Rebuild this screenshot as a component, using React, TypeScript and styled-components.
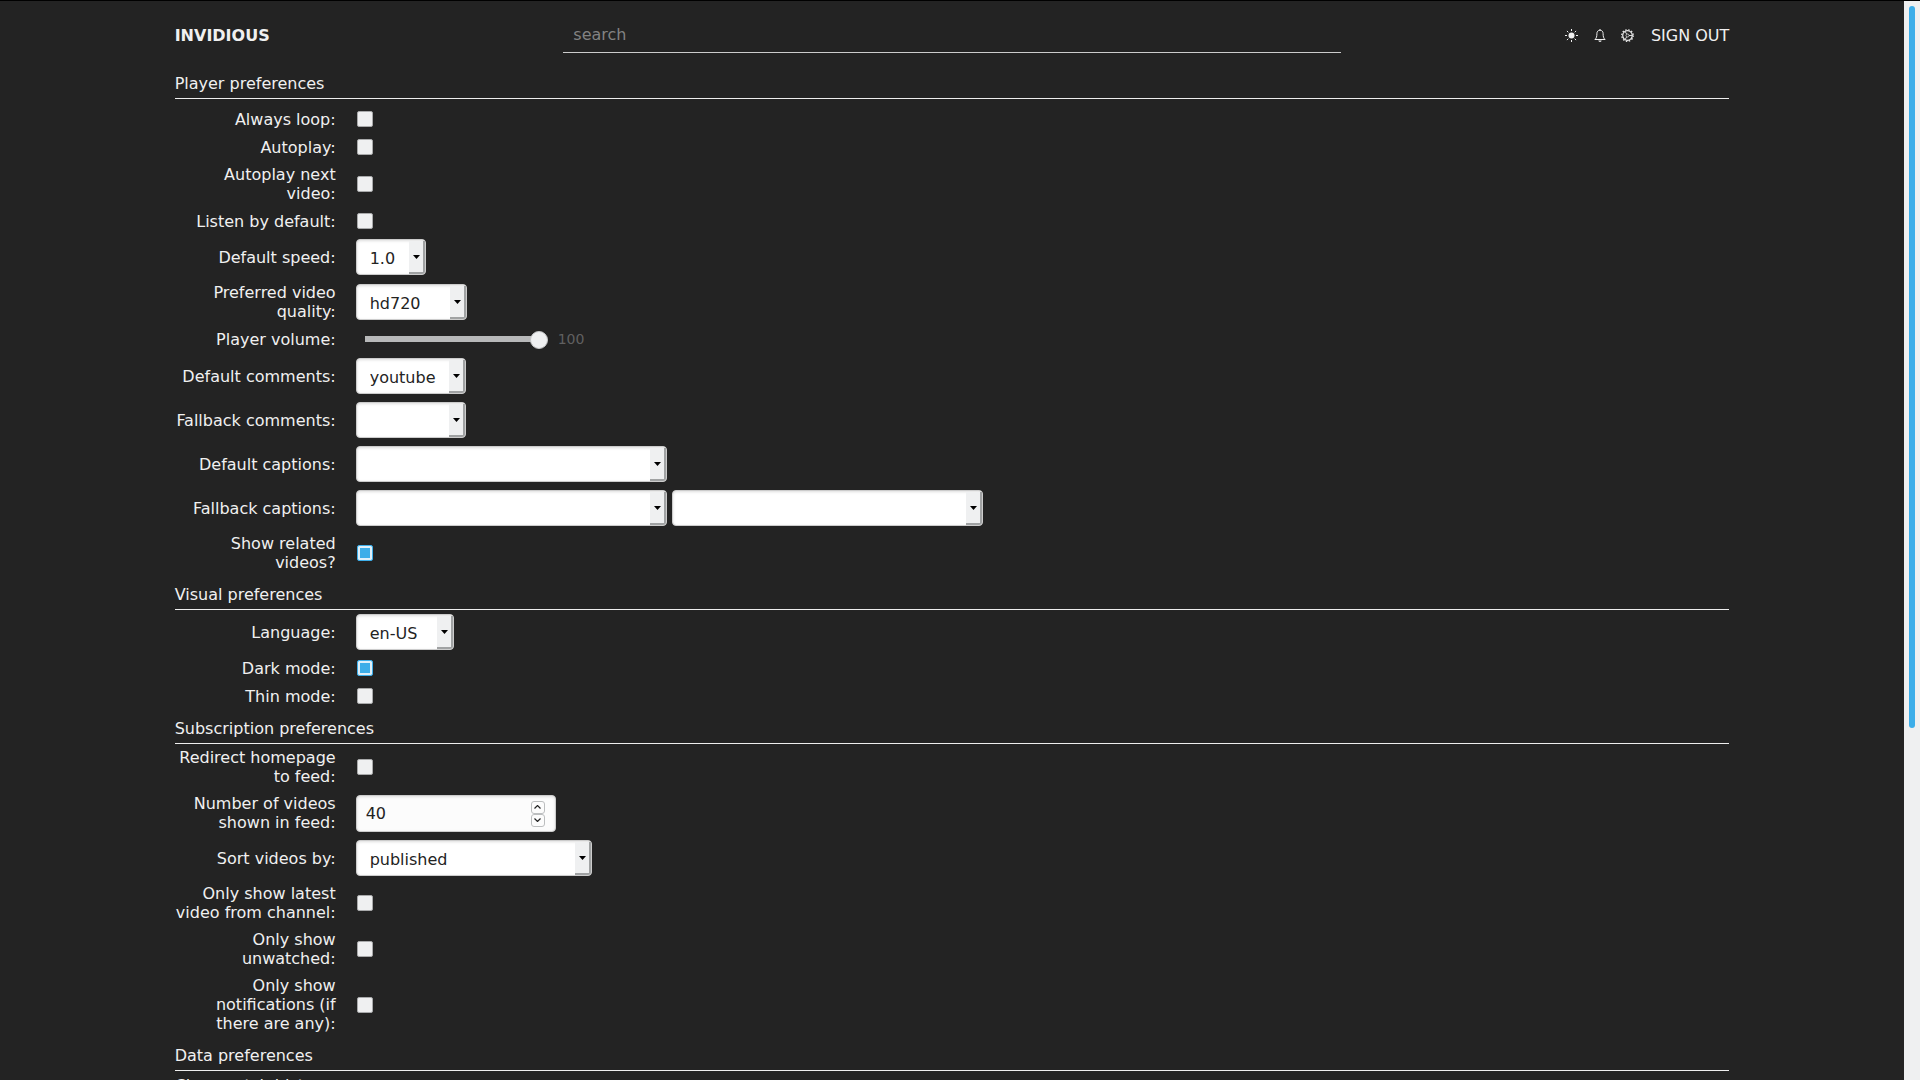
import React from "react";
import styled, { createGlobalStyle } from "styled-components";

const GlobalStyle = createGlobalStyle`
  * { box-sizing: border-box; }
  html, body, #root { height: 100%; }
  body {
    margin: 0;
    overflow: hidden;
    background: #232323;
    color: #f0f0f0;
    font: 16px/19px "DejaVu Sans", sans-serif;
  }
  a { color: inherit; text-decoration: none; }
`;

const Frame = styled.div`
  display: flex;
  height: 100%;
  border-top: 1px solid #000;
`;

const Scroller = styled.main`
  flex: 1;
  min-width: 0;
  overflow: hidden;
  display: grid;
  grid-template-columns: 2fr 20fr 2fr;
`;

const Content = styled.div`
  grid-column: 2;
  min-width: 0;
  padding: 0 16px;
`;

const Scrollbar = styled.div`
  flex: none;
  width: 16px;
  padding: 5px;
  background: #eff0f1;
`;

const Thumb = styled.div`
  width: 6px;
  height: calc(100% * 27 / 40);
  border-radius: 3px;
  background: #3daee9;
`;

const Header = styled.header`
  display: grid;
  grid-template-columns: 1fr 2fr 1fr;
  align-items: center;
  padding: 16px 0 17px;
`;

const Brand = styled.a`
  font-weight: bold;
`;

const Search = styled.input`
  width: 100%;
  height: 36px;
  padding: 0 10px;
  border: 0;
  border-bottom: 1px solid #ccc;
  outline: 0;
  background: transparent;
  color: inherit;
  font: inherit;
  &::placeholder { color: #828282; opacity: 1; }
`;

const UserNav = styled.nav`
  display: flex;
  justify-content: flex-end;
  align-items: center;
  gap: 12px;
`;

const IconLink = styled.a`
  display: flex;
  justify-content: center;
  width: 16px;
`;

const SignOut = styled.a`
  padding-left: 3px;
`;

const Fieldset = styled.section<{ $gap: number }>`
  display: flex;
  flex-direction: column;
  gap: 8px;
  margin-bottom: 9px;
  & > h2 + * { margin-top: ${(p) => p.$gap - 8}px; }
`;

const Legend = styled.h2`
  margin: 0;
  padding: 4px 0 5px;
  border-bottom: 1px solid #eee;
  font-size: 16px;
  font-weight: normal;
`;

const Row = styled.div`
  display: flex;
  align-items: center;
  min-height: 20px;
`;

const Label = styled.label`
  flex: none;
  width: 161px;
  margin-right: 20px;
  text-align: right;
`;

const Check = styled.input`
  appearance: none;
  width: 16px;
  height: 16px;
  margin: 0 1px;
  border: 1px solid #a8a9aa;
  border-radius: 2px;
  background: #eff0f1;
  &:checked {
    border-color: #3daee9;
    background: #3daee9;
    box-shadow: inset 0 0 0 2px #dff0fa;
  }
`;

const SelectBox = styled.span<{ $width: number }>`
  position: relative;
  display: block;
  width: ${(p) => p.$width}px;
  & + & { margin-left: 5px; }
`;

const SelectField = styled.select`
  appearance: none;
  display: block;
  width: 100%;
  height: 36px;
  padding: 2px 18px 0 13px;
  border: 1px solid #ccc;
  border-radius: 4px;
  background: #fff;
  box-shadow: inset 0 1px 3px #ddd;
  color: #232323;
  font: inherit;
`;

const Drop = styled.span`
  position: absolute;
  top: 2px;
  right: 1px;
  bottom: 1px;
  width: 16px;
  display: flex;
  align-items: center;
  justify-content: center;
  padding-left: 2px;
  border: solid #a0a2a3;
  border-width: 0 2px 2px 0;
  border-bottom-right-radius: 3px;
  background: #eff0f1;
  pointer-events: none;
`;

const Slider = styled.input`
  appearance: none;
  width: 183px;
  height: 21px;
  margin: 0 10px 0 9px;
  background: linear-gradient(#b7b8b9, #b7b8b9) 0 7px / 174px 6px no-repeat;
  border-radius: 3px;
  &::-webkit-slider-thumb {
    appearance: none;
    width: 18px;
    height: 18px;
    border: 1px solid #c4c5c6;
    border-radius: 50%;
    background: #eff0f1;
  }
`;

const Volume = styled.output`
  color: #606060;
  font-size: 14px;
`;

const NumberBox = styled.span`
  position: relative;
  display: block;
`;

const NumberField = styled.input`
  appearance: textfield;
  display: block;
  width: 200px;
  height: 37px;
  padding: 0 40px 0 9px;
  border: 1px solid #ccc;
  border-radius: 4px;
  background: #fcfcfc;
  box-shadow: inset 0 1px 3px #ddd;
  color: #232323;
  font: inherit;
  &::-webkit-inner-spin-button { appearance: none; }
`;

const Spinner = styled.span`
  position: absolute;
  top: 6px;
  right: 11px;
  display: grid;
`;

const Step = styled.button`
  display: flex;
  align-items: center;
  justify-content: center;
  width: 14px;
  height: 13px;
  padding: 0;
  border: 1px solid #bcbebf;
  border-radius: 3px;
  background: #fcfcfc;
`;

const SunIcon = () => (
  <svg width="13" height="13" viewBox="0 0 13 13" stroke="#f0f0f0" strokeWidth="1" fill="none">
    <circle cx="6.5" cy="6.5" r="3" fill="#f0f0f0" stroke="none" />
    <path d="M6.5 0v2M6.5 11v2M0 6.5h2M11 6.5h2M1.9 1.9l1.4 1.4M9.7 9.7l1.4 1.4M11.1 1.9L9.7 3.3M3.3 9.7l-1.4 1.4" />
  </svg>
);

const BellIcon = () => (
  <svg width="12" height="13" viewBox="0 0 12 13" stroke="#f0f0f0" strokeWidth="1" fill="none">
    <path d="M6 1.200C3.900 1.300 2.900 2.700 2.900 4.600c0 3.200-.5 4.500-2 5.900h10.200c-1.500-1.400-2-2.700-2-5.900C9.100 2.700 8.100 1.300 6 1.200z" />
    <path d="M6 0v1.200" />
    <path d="M4.300 11.500h3.400c-.2.900-.8 1.400-1.700 1.400s-1.500-.5-1.700-1.400z" fill="#f0f0f0" stroke="none" />
  </svg>
);

const GearIcon = () => (
  <svg width="13" height="13" viewBox="0 0 13 13" stroke="#ececec" fill="none">
    <circle cx="6.500" cy="6.500" r="4.800" strokeWidth="1.200" />
    <circle cx="6.500" cy="6.500" r="5.800" strokeWidth="1.200" strokeDasharray="1.500 1.537" />
    <circle cx="6.500" cy="6.500" r="1.500" strokeWidth="0.700" />
    <path d="M8 6.500h3.400M5.700 5.200L4 2.300M5.700 7.800L4 10.700" strokeWidth="0.900" />
  </svg>
);

type FieldProps = { id: string; label: string; children: React.ReactNode };

const Field = ({ id, label, children }: FieldProps) => (
  <Row>
    <Label htmlFor={id}>{label}</Label>
    {children}
  </Row>
);

const CheckRow = ({ id, label, on }: { id: string; label: string; on?: boolean }) => (
  <Field id={id} label={label}>
    <Check type="checkbox" id={id} defaultChecked={on} />
  </Field>
);

type SelectProps = { id: string; width: number; options: string[]; name?: string };

const Select = ({ id, width, options, name }: SelectProps) => (
  <SelectBox $width={width}>
    <SelectField id={id} aria-label={name}>
      {options.map((o) => (
        <option key={o}>{o}</option>
      ))}
    </SelectField>
    <Drop>
      <svg width="7" height="4" viewBox="0 0 7 4">
        <path d="M0 0h7L3.500 4z" />
      </svg>
    </Drop>
  </SelectBox>
);

export default function App() {
  return (
    <>
      <GlobalStyle />
      <Frame>
        <Scroller>
          <Content>
            <Header>
              <Brand href="#">INVIDIOUS</Brand>
              <Search type="search" placeholder="search" aria-label="search" />
              <UserNav>
                <IconLink href="#" aria-label="Toggle theme"><SunIcon /></IconLink>
                <IconLink href="#" aria-label="Notifications"><BellIcon /></IconLink>
                <IconLink href="#" aria-label="Preferences"><GearIcon /></IconLink>
                <SignOut href="#">SIGN OUT</SignOut>
              </UserNav>
            </Header>

            <Fieldset $gap={10}>
              <Legend>Player preferences</Legend>
              <CheckRow id="loop" label="Always loop:" />
              <CheckRow id="autoplay" label="Autoplay:" />
              <CheckRow id="continue" label="Autoplay next video:" />
              <CheckRow id="listen" label="Listen by default:" />
              <Field id="speed" label="Default speed:">
                <Select id="speed" width={70} options={["1.0", "2.0", "1.5", "0.5"]} />
              </Field>
              <Field id="quality" label="Preferred video quality:">
                <Select id="quality" width={111} options={["hd720", "medium", "small"]} />
              </Field>
              <Field id="volume" label="Player volume:">
                <Slider type="range" id="volume" min={0} max={100} defaultValue={100} />
                <Volume htmlFor="volume">100</Volume>
              </Field>
              <Field id="comments" label="Default comments:">
                <Select id="comments" width={110} options={["youtube", "reddit"]} />
              </Field>
              <Field id="comments-fallback" label="Fallback comments:">
                <Select id="comments-fallback" width={110} options={["", "youtube", "reddit"]} />
              </Field>
              <Field id="captions" label="Default captions:">
                <Select id="captions" width={311} options={["", "English"]} />
              </Field>
              <Field id="captions-1" label="Fallback captions:">
                <Select id="captions-1" width={311} options={["", "English"]} />
                <Select id="captions-2" width={311} options={["", "English"]} name="Second fallback captions" />
              </Field>
              <CheckRow id="related" label="Show related videos?" on />
            </Fieldset>

            <Fieldset $gap={4}>
              <Legend>Visual preferences</Legend>
              <Field id="locale" label="Language:">
                <Select id="locale" width={98} options={["en-US", "de", "fr"]} />
              </Field>
              <CheckRow id="dark" label="Dark mode:" on />
              <CheckRow id="thin" label="Thin mode:" />
            </Fieldset>

            <Fieldset $gap={4}>
              <Legend>Subscription preferences</Legend>
              <CheckRow id="redirect" label="Redirect homepage to feed:" />
              <Field id="max" label="Number of videos shown in feed:">
                <NumberBox>
                  <NumberField type="number" id="max" defaultValue={40} />
                  <Spinner>
                    <Step type="button" aria-label="Increase">
                      <svg width="7" height="4" viewBox="0 0 7 4" fill="none" stroke="#232323" strokeWidth="1.200">
                        <path d="M0.500 3.500l3-3 3 3" />
                      </svg>
                    </Step>
                    <Step type="button" aria-label="Decrease">
                      <svg width="7" height="4" viewBox="0 0 7 4" fill="none" stroke="#232323" strokeWidth="1.200">
                        <path d="M0.500 0.500l3 3 3-3" />
                      </svg>
                    </Step>
                  </Spinner>
                </NumberBox>
              </Field>
              <Field id="sort" label="Sort videos by:">
                <Select id="sort" width={236} options={["published", "alphabetically", "channel name"]} />
              </Field>
              <CheckRow id="latest" label="Only show latest video from channel:" />
              <CheckRow id="unseen" label="Only show unwatched:" />
              <CheckRow id="notify" label="Only show notifications (if there are any):" />
            </Fieldset>

            <Fieldset $gap={4}>
              <Legend>Data preferences</Legend>
              <Row><a href="#">Clear watch history</a></Row>
            </Fieldset>
          </Content>
        </Scroller>
        <Scrollbar><Thumb /></Scrollbar>
      </Frame>
    </>
  );
}
